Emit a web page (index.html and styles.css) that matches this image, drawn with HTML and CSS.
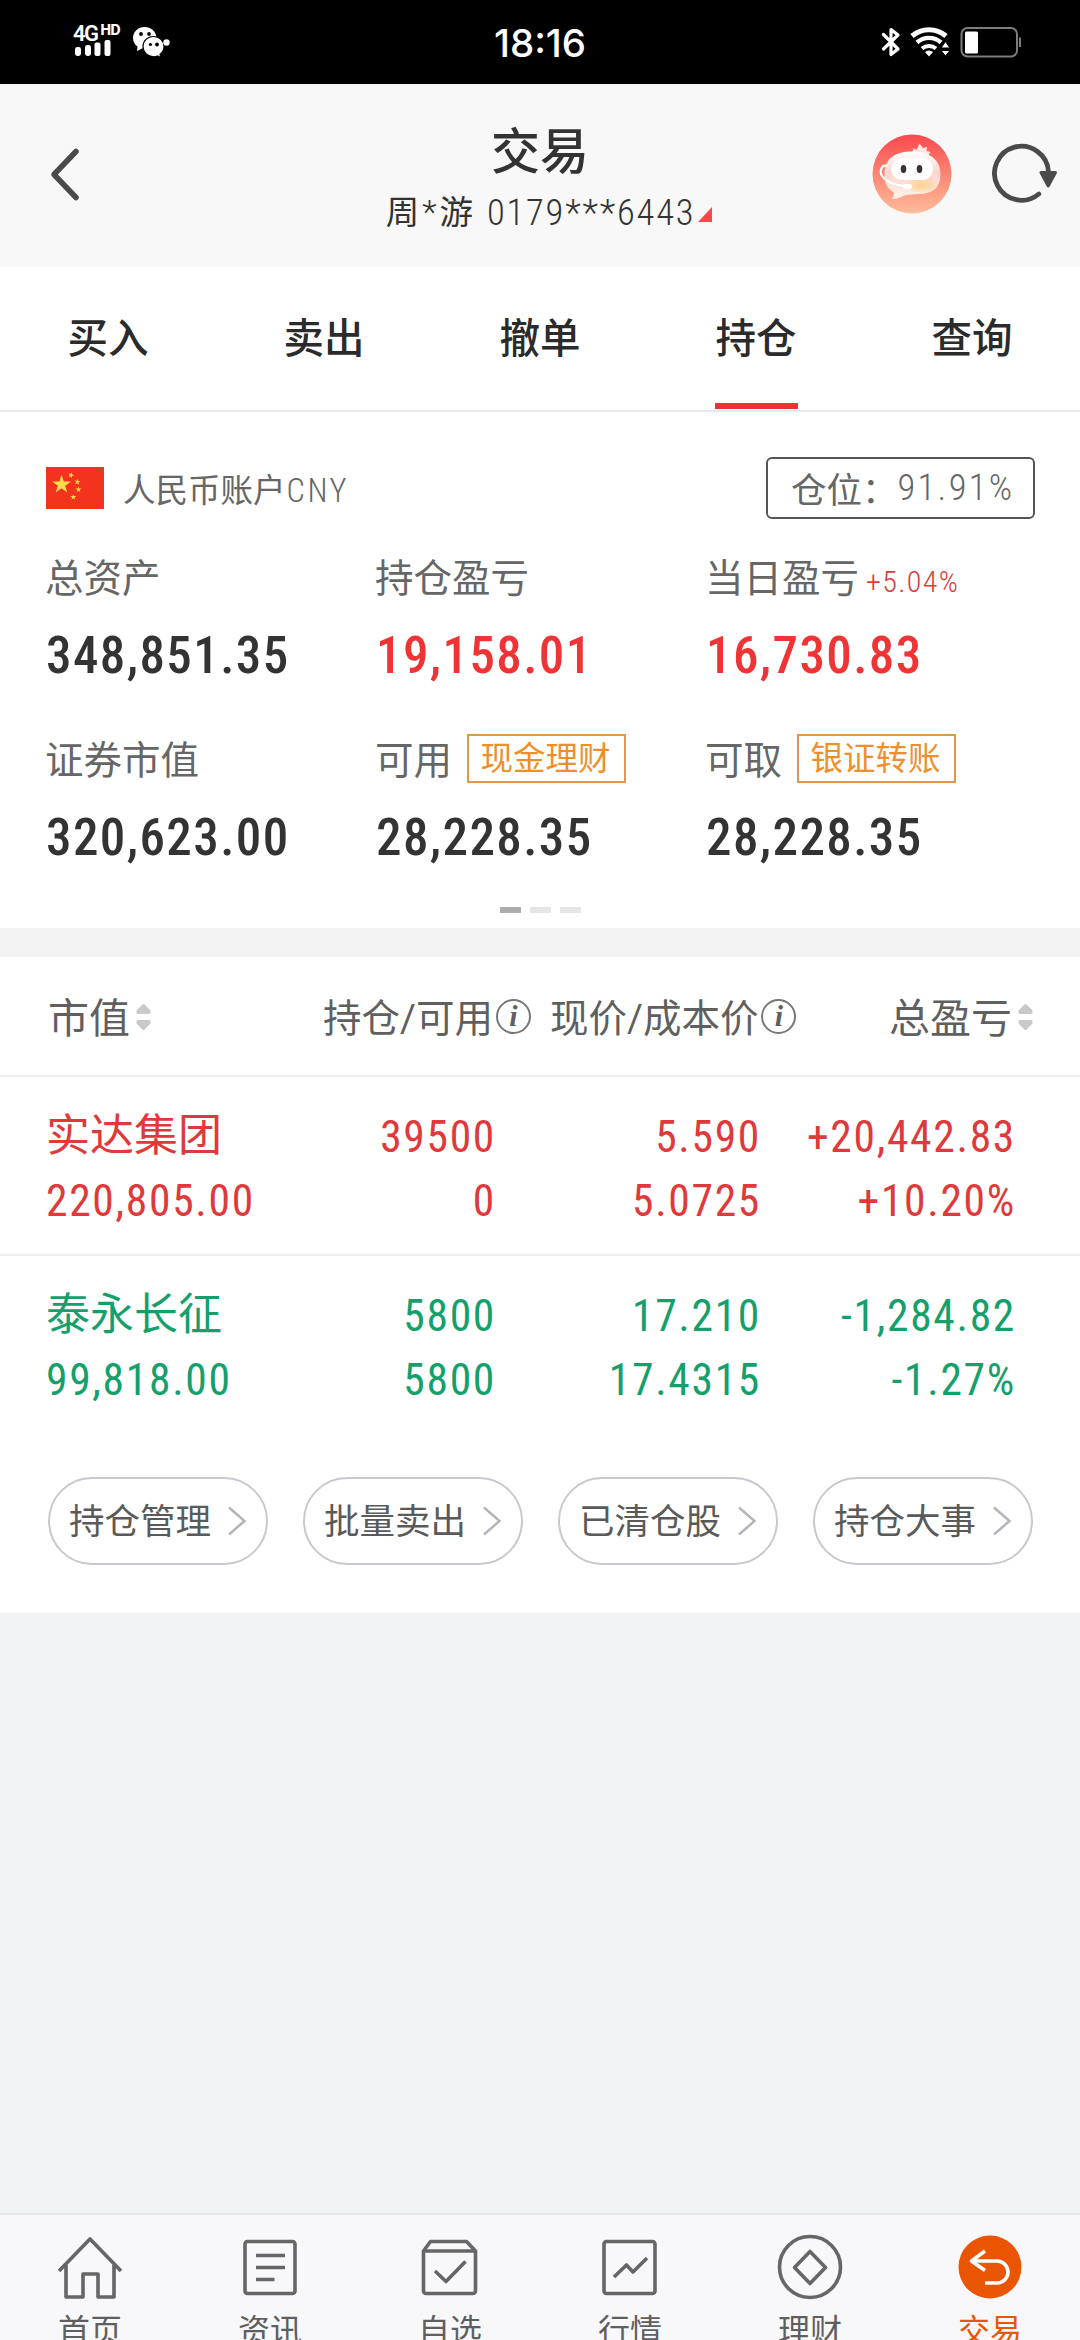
FILE: index.html
```html
<!DOCTYPE html>
<html lang="zh-CN">
<head>
<meta charset="utf-8">
<title>交易</title>
<link rel="stylesheet" href="styles.css">
</head>
<body>
<div class="status">
  <div class="signal">
    <div class="net">4G<b>HD</b></div>
    <svg width="36" height="16" viewBox="0 0 36 16" fill="#fff"><rect x="0" y="7" width="6" height="9" rx="2.4"/><rect x="10" y="5" width="6" height="11" rx="2.4"/><rect x="19.5" y="2.500" width="6" height="13.500" rx="2"/><rect x="29.500" y="0" width="6" height="16" rx="2"/></svg>
  </div>
  <svg class="wechat" width="37" height="30" viewBox="0 0 37 30">
    <path fill="#fff" d="M11.500 0C5.200 0 0 4.900 0 11c0 3.600 1.700 6.500 4.500 8.600L4 24l5-2.600 4 .4L23.500 10.500C23 4.500 18 0 11.500 0z"/>
    <circle cx="8" cy="7" r="1.900"/><circle cx="16" cy="7" r="1.900"/>
    <path fill="#fff" stroke="#000" stroke-width="1.200" d="M20.500 9.500C14.500 9.500 10 14 10 19.500s4.500 10.300 10.500 10.300c1.500 0 2.900-.3 4.200-.8l3 1.500-.6-3.200c2.500-2 3.900-4.700 3.900-7.800 0-5.500-4.500-10-10.500-10z"/>
    <circle cx="17.500" cy="17.500" r="1.600"/><circle cx="24" cy="17.500" r="1.900"/>
    <circle cx="33.500" cy="15.500" r="3.200" fill="#fff"/>
  </svg>
  <div class="clock">18:16</div>
  <svg class="sys" width="142" height="32" viewBox="0 0 142 32" fill="none">
    <path d="M2.500 8.500L17 23 10 28.500V3.500L17 9 2.500 23" stroke="#fff" stroke-width="3.200" stroke-linejoin="round" stroke-linecap="round"/>
    <path d="M31 10a26 26 0 0 1 34 0" stroke="#fff" stroke-width="5"/>
    <path d="M36 16.500a18 18 0 0 1 24 0" stroke="#fff" stroke-width="4.400"/>
    <path d="M41 22.500a11 11 0 0 1 14 0" stroke="#fff" stroke-width="4"/>
    <path d="M44 26a6 6 0 0 1 8 0l-4 4.500z" fill="#fff"/>
    <path d="M60 22l4.500-6.500L69 22zM60 24.500h9L64.500 30z" fill="#fff" stroke="#000" stroke-width="1"/>
    <rect x="80.500" y="2" width="55.500" height="28.500" rx="6" stroke="#7d7d7d" stroke-width="2"/>
    <rect x="84" y="5.500" width="13" height="22" rx="1.500" fill="#fff"/>
    <path d="M139 11.500v9.500" stroke="#7d7d7d" stroke-width="2"/>
  </svg>
</div>

<header class="header">
  <svg class="back" width="32" height="56" viewBox="0 0 32 56"><path d="M27 5.500L5 28.500 27 51.500" fill="none" stroke="#4a4a4a" stroke-width="5.500" stroke-linecap="round" stroke-linejoin="round"/></svg>
  <div class="titles">
    <h1>交易</h1>
    <div class="acct"><span>周<i>*</i>游</span><span class="no">0179***6443</span><svg width="14" height="15" viewBox="0 0 14 15"><path d="M14 0v15H0z" fill="#fb4848"/></svg></div>
  </div>
  <div class="tools">
    <svg width="80" height="80" viewBox="0 0 80 80">
      <defs>
        <linearGradient id="sky" x1="0" y1="0" x2="0" y2="1"><stop offset="0" stop-color="#f9484e"/><stop offset=".5" stop-color="#fb8673"/><stop offset="1" stop-color="#ffbb9b"/></linearGradient>
        <linearGradient id="head" x1="0" y1="0" x2="0" y2="1"><stop offset="0" stop-color="#fff"/><stop offset=".45" stop-color="#fbd5cd"/><stop offset="1" stop-color="#fff3e8"/></linearGradient>
        <radialGradient id="glow"><stop offset="0" stop-color="#fcd089"/><stop offset="1" stop-color="#fcd089" stop-opacity="0"/></radialGradient>
      </defs>
      <circle cx="40" cy="40" r="39.500" fill="url(#sky)"/>
      <path d="M40 19l1.500-5 3 2 3-6.500 3.500 4.500 4-1-.5 4 4 1-3 5z" fill="#ffe7e1"/>
      <path d="M40 17.500c17 0 28.500 8 28.500 22.500 0 14-8 20-22 20l-13 1c-3 1.500-8 4-14 4 2-2 3-4 2-7C14.500 54 12.500 49 12.500 40c0-15 10-22.500 27.500-22.500z" fill="url(#head)"/>
      <ellipse cx="50" cy="51" rx="18" ry="9" fill="url(#glow)"/>
      <rect x="19" y="24" width="42" height="22" rx="11" fill="#fff"/>
      <path d="M15 32c-5-2-8 5-5 10 4 6 12 9 23 10" fill="none" stroke="#fff" stroke-width="2.200"/>
      <rect x="31" y="50" width="9" height="5" rx="2.500" fill="#fff"/>
      <ellipse cx="31.500" cy="35" rx="2.800" ry="4" fill="#3a3033"/><ellipse cx="47.500" cy="35" rx="2.800" ry="4" fill="#3a3033"/>
    </svg>
    <svg width="66" height="62" viewBox="0 0 66 62"><path d="M46.800 51A27 27 0 1 1 56.500 29" fill="none" stroke="#4a4a4a" stroke-width="4.800" stroke-linecap="round"/><path d="M49 29.500h14.500L56.200 43z" fill="#4a4a4a" stroke="#4a4a4a" stroke-width="3" stroke-linejoin="round"/></svg>
  </div>
</header>

<nav class="tabs"><a>买入</a><a>卖出</a><a>撤单</a><a class="on">持仓</a><a>查询</a></nav>

<section class="account">
  <div class="acct-head">
    <svg width="58" height="42" viewBox="0 0 58 42"><rect width="58" height="42" fill="#f2331d"/><g fill="#fedb4a"><path id="st" d="M15.500 7.500l2.250 6.900h7.250l-5.870 4.270 2.240 6.900-5.870-4.260-5.870 4.260 2.240-6.900L6 14.400h7.250z"/><use href="#st" transform="translate(22.300 1.300) rotate(20) scale(.32)"/><use href="#st" transform="translate(27.500 8.600) rotate(10) scale(.32)"/><use href="#st" transform="translate(27.500 17) scale(.32)"/><use href="#st" transform="translate(22.300 24.500) scale(.32)"/></g></svg>
    <span class="cur">人民币账户<span class="code">CNY</span></span>
    <div class="position"><span>仓位：</span><span class="pct">91.91%</span></div>
  </div>
  <div class="grid">
    <div class="cell"><div class="lab">总资产</div><div class="val">348,851.35</div></div>
    <div class="cell"><div class="lab">持仓盈亏</div><div class="val red">19,158.01</div></div>
    <div class="cell"><div class="lab">当日盈亏<small>+5.04%</small></div><div class="val red">16,730.83</div></div>
    <div class="cell"><div class="lab">证券市值</div><div class="val">320,623.00</div></div>
    <div class="cell"><div class="lab">可用<em>现金理财</em></div><div class="val">28,228.35</div></div>
    <div class="cell"><div class="lab">可取<em>银证转账</em></div><div class="val">28,228.35</div></div>
  </div>
  <div class="dots"><i class="on"></i><i></i><i></i></div>
</section>

<section class="hold">
  <div class="row thead">
    <div class="c1 big">市值<svg class="sort" width="15" height="28" viewBox="0 0 15 28"><path d="M7.500 2.500L13 8V9.500H2V8zM7.500 25.500L13 20V18.500H2V20z" fill="#c9c9c9" stroke="#c9c9c9" stroke-width="3" stroke-linejoin="round"/></svg></div>
    <div class="c2">持仓/可用<span class="info">i</span></div>
    <div class="c3">现价/成本价<span class="info">i</span></div>
    <div class="c4 big">总盈亏<svg class="sort" width="15" height="28" viewBox="0 0 15 28"><path d="M7.500 2.500L13 8V9.500H2V8zM7.500 25.500L13 20V18.500H2V20z" fill="#c9c9c9" stroke="#c9c9c9" stroke-width="3" stroke-linejoin="round"/></svg></div>
  </div>
  <div class="row stock up">
    <div class="c1"><span class="name">实达集团</span><span>220,805.00</span></div>
    <div class="c2"><span>39500</span><span>0</span></div>
    <div class="c3"><span>5.590</span><span>5.0725</span></div>
    <div class="c4"><span>+20,442.83</span><span>+10.20%</span></div>
  </div>
  <div class="row stock down">
    <div class="c1"><span class="name">泰永长征</span><span>99,818.00</span></div>
    <div class="c2"><span>5800</span><span>5800</span></div>
    <div class="c3"><span>17.210</span><span>17.4315</span></div>
    <div class="c4"><span>-1,284.82</span><span>-1.27%</span></div>
  </div>
  <div class="pills">
    <a>持仓管理<svg width="20" height="30" viewBox="0 0 20 30"><path d="M2 1.500L17.500 15 2 28.500"/></svg></a>
    <a>批量卖出<svg width="20" height="30" viewBox="0 0 20 30"><path d="M2 1.500L17.500 15 2 28.500"/></svg></a>
    <a>已清仓股<svg width="20" height="30" viewBox="0 0 20 30"><path d="M2 1.500L17.500 15 2 28.500"/></svg></a>
    <a>持仓大事<svg width="20" height="30" viewBox="0 0 20 30"><path d="M2 1.500L17.500 15 2 28.500"/></svg></a>
  </div>
</section>

<footer class="bar">
  <a><svg viewBox="0 0 66 66"><path d="M2 37L33 5l31 32M9 31v32h17V40h15v23h16V31"/></svg>首页</a>
  <a><svg viewBox="0 0 66 66"><rect x="8" y="7.500" width="50" height="52" rx="2.500"/><path d="M19 21.500h29M19 33.500h29M19 45.500h18.500"/></svg>资讯</a>
  <a><svg viewBox="0 0 66 66"><path d="M6.500 17L13.500 7.500h36L58.500 17v40a2.500 2.500 0 0 1-2.500 2.500H9a2.500 2.500 0 0 1-2.500-2.500zM6.500 17h52M18 37l11 10.500L48.500 27.500"/></svg>自选</a>
  <a><svg viewBox="0 0 66 66"><rect x="7" y="7.500" width="51" height="52" rx="2.500"/><path d="M17 43L29.500 31l6.500 7L50 24"/></svg>行情</a>
  <a><svg viewBox="0 0 66 66"><circle cx="33" cy="33" r="30.500"/><path d="M33 17.500L48.500 33.500 33 49.500 17.500 33.500z"/></svg>理财</a>
  <a class="on"><svg viewBox="0 0 66 66"><circle cx="33" cy="33" r="31.500" fill="#ea5504" stroke="none"/><path d="M28 17L14.500 27 28 36.500M14.500 27H40a11 11 0 0 1 0 22H28" stroke="#fff"/></svg>交易</a>
</footer>
</body>
</html>
```
FILE: styles.css
```css
* { box-sizing: border-box; }
body {
  margin: 0;
  width: 1080px;
  height: 2340px;
  overflow: hidden;
  display: flex;
  flex-direction: column;
  background: #f2f3f5;
  color: #333;
  font-family: Roboto, "Noto Sans CJK SC", sans-serif;
}
svg { display: block; flex: none; }
i, em { font-style: normal; }

.status {
  height: 84px;
  flex: none;
  background: #000;
  color: #fff;
  display: grid;
  grid-template-columns: 133px 307px 200px 240px 142px;
  align-items: start;
}
.signal { padding: 23px 0 0 74px; }
.net { display: flex; height: 17px; line-height: 21px; font-size: 22px; font-weight: 600; letter-spacing: -1.5px; margin-left: -1px; }
.net b { font-family: Inter, sans-serif; font-size: 14px; font-weight: 800; line-height: 14px; margin-left: 3px; letter-spacing: -.5px; }
.wechat { margin-top: 27px; }
.clock { font: 500 38.500px/86px Inter, sans-serif; text-align: center; }
.status .sys { margin-top: 26px; grid-column: 5; margin-left: 1px; }
.signal svg { margin-left: 1px; }

.header {
  height: 183px;
  flex: none;
  background: #f8f8f8;
  display: grid;
  grid-template-columns: 240px 600px 240px;
}
.back { margin: 62px 0 0 49px; }
.titles { text-align: center; }
h1 { margin: 42px 0 0; font-size: 49px; line-height: 54px; font-weight: 500; }
.acct { display: flex; align-items: flex-end; justify-content: center; font-size: 33.500px; line-height: 40px; margin: 13px 0 0 18px; white-space: nowrap; }
.acct .no { font-size: 36.500px; font-weight: 300; font-stretch: 87%; letter-spacing: 1.800px; margin: 0 3px 0 14px; }
.acct i { font-weight: 300; padding: 0 3px; }
.acct svg { margin-bottom: 11px; }
.tools { display: flex; gap: 40px; padding: 50px 0 0 32px; }
.tools svg + svg { margin-top: 9px; }

.tabs { height: 145px; flex: none; background: #fff; display: flex; border-bottom: 2px solid #e8e8e8; }
.tabs a { flex: 1; display: flex; flex-direction: column; align-items: center; font-size: 40.500px; line-height: 58px; font-weight: 500; color: #2b2b2b; padding-top: 43px; }
.tabs .on::after { content: ""; width: 83px; height: 6px; background: #eb3233; margin-top: 35px; }

.account { height: 516px; flex: none; background: #fff; padding: 44px 45px 0 46px; }
.acct-head { height: 63px; display: flex; align-items: center; color: #666; }
.cur { margin-left: 19px; font-size: 32.500px; font-weight: 400; font-stretch: 87%; }
.code { font-weight: 300; letter-spacing: 2.500px; margin-left: 1px; }
.position { margin-left: auto; width: 269px; height: 62px; border: 2px solid #555; border-radius: 6px; display: flex; align-items: center; padding-left: 23px; font-size: 35.500px; }
.pct { font-weight: 300; font-size: 36.500px; font-stretch: 87%; letter-spacing: 2.300px; }
.grid { display: grid; grid-template-columns: 330px 330px 1fr; grid-auto-rows: 182px; padding-top: 34px; height: 387px; }
.lab { height: 52px; display: flex; align-items: center; font-size: 38.500px; line-height: 52px; color: #666; margin-left: -1px; }
.lab small { font-size: 30px; font-weight: 300; font-stretch: 87%; color: #e03a3b; margin: 6px 0 0 7px; letter-spacing: 1.400px; }
.lab em { width: 159px; height: 49px; margin: -5px 0 0 15px; border: 2px solid #e0984a; color: #ee8f2c; font-size: 32.500px; line-height: 46px; text-align: center; text-indent: -2px; }
.val { font-size: 51px; font-weight: 500; font-stretch: 87%; line-height: 60px; margin-top: 21px; letter-spacing: 1.400px; white-space: nowrap; }
.red { color: #ef3436; }
.dots { display: flex; gap: 8.500px; justify-content: center; padding-top: 1px; }
.dots i { width: 21.500px; height: 6px; background: #e6e6e6; }
.dots .on { background: #acacac; }

.hold { height: 656px; flex: none; margin-top: 29px; background: #fff; box-shadow: 0 -29px #f3f3f3; }
.row { display: grid; grid-template-columns: 276px 220px 265px 255px; border-bottom: 2px solid #f0f0f0; }
.thead { height: 120px; font-size: 38.500px; color: #5f5f5f; }
.thead > div { display: flex; align-items: center; white-space: nowrap; height: 116px; }
.thead .big { font-size: 41px; }
.thead .c1 { padding-left: 48px; }
.thead .c2 { padding-left: 47px; }
.thead .c3 { padding-left: 54px; }
.thead .c4 { padding-left: 128px; }
.sort { margin: 3px 0 0 6px; }
.info { flex: none; width: 35px; height: 35px; border: 2px solid #777; border-radius: 50%; margin: 3px 0 0 3px; font: italic bold 30px/29px "Liberation Serif", serif; text-align: center; }
.stock { height: 179px; font-size: 43.500px; padding-top: 29px; line-height: 64px; letter-spacing: 1.700px; font-weight: 400; font-stretch: 87%; }
.stock > div { display: flex; flex-direction: column; text-align: right; }
.stock .c1 { text-align: left; padding-left: 46px; }
.stock .name { font-size: 44px; letter-spacing: 0; line-height: 61px; padding-bottom: 3px; }
.up { color: #e0393b; }
.down { color: #14a06a; border-bottom: 0; }
.pills { display: flex; gap: 35px; padding: 42px 0 0 48px; }
.pills a { width: 220px; height: 88px; border: 2px solid #c8c8cf; border-radius: 44px; font-size: 35.500px; line-height: 86px; color: #5a5a5a; padding-left: 19px; display: flex; }
.pills svg { margin: 27px 0 0 16px; fill: none; stroke: #b4b4bf; stroke-width: 2.500; }

.bar { height: 180px; flex: none; margin-top: 600px; border-top: 2px solid #e8e8ea; background: #f8f8fa; display: flex; color: #5f5f5f; }
.bar a { width: 180px; flex: none; display: flex; flex-direction: column; align-items: center; font-size: 32px; line-height: 46px; padding-top: 19px; }
.bar svg { width: 66px; height: 66px; margin-bottom: 8px; fill: none; stroke: #666; stroke-width: 3.600; stroke-linejoin: round; }
.bar .on { color: #ea5504; }
```
